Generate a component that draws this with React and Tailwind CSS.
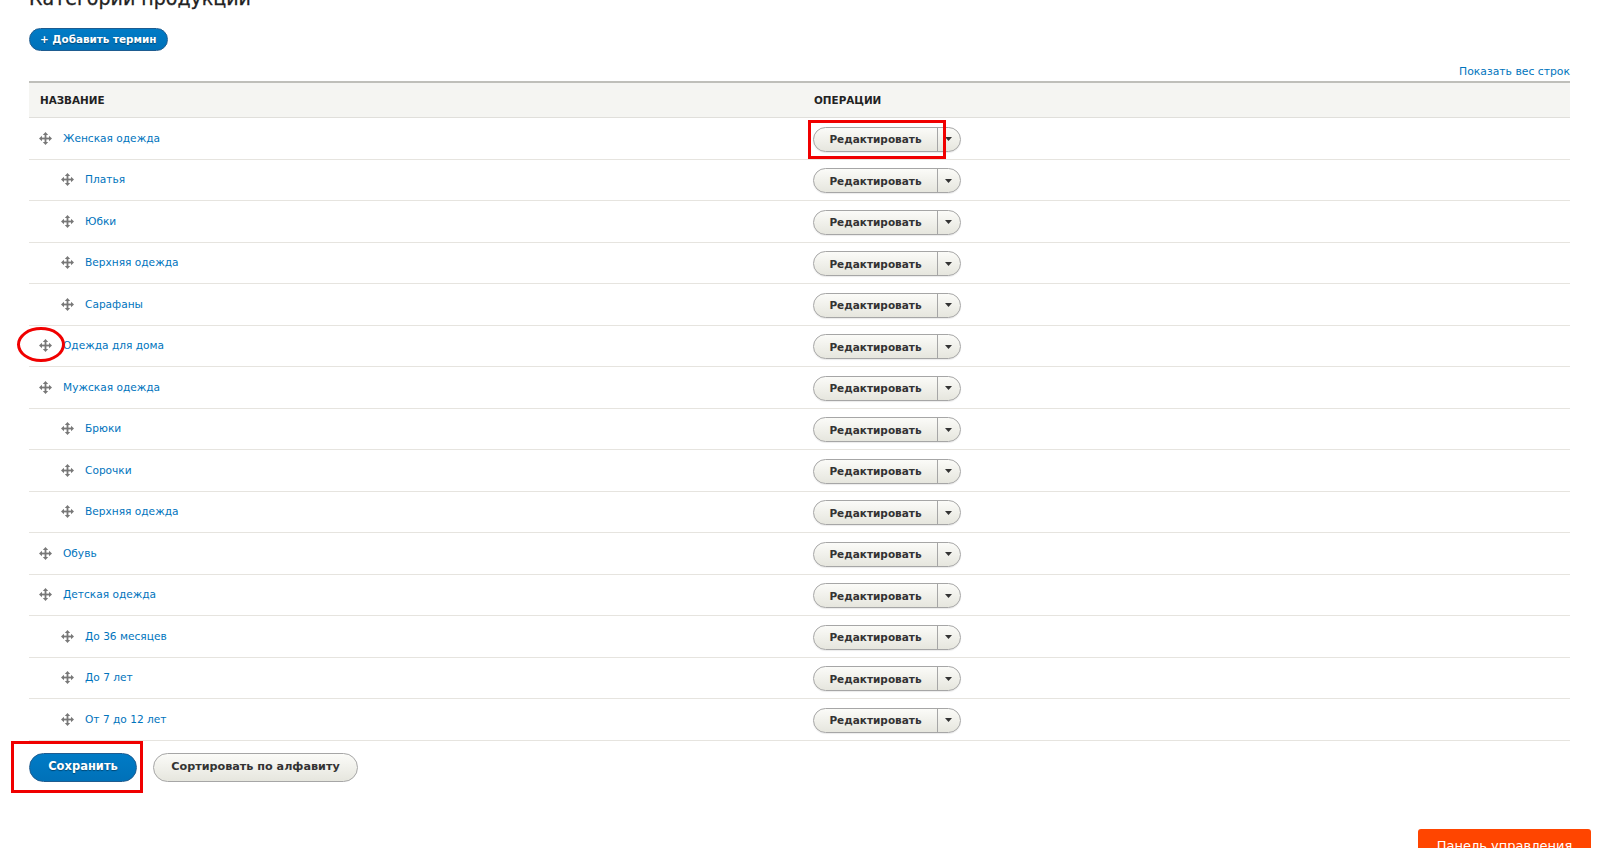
import React from "react";

const rows = [
  { name: "Женская одежда", level: 0 },
  { name: "Платья", level: 1 },
  { name: "Юбки", level: 1 },
  { name: "Верхняя одежда", level: 1 },
  { name: "Сарафаны", level: 1 },
  { name: "Одежда для дома", level: 0 },
  { name: "Мужская одежда", level: 0 },
  { name: "Брюки", level: 1 },
  { name: "Сорочки", level: 1 },
  { name: "Верхняя одежда", level: 1 },
  { name: "Обувь", level: 0 },
  { name: "Детская одежда", level: 0 },
  { name: "До 36 месяцев", level: 1 },
  { name: "До 7 лет", level: 1 },
  { name: "От 7 до 12 лет", level: 1 },
];

function Handle() {
  return (
    <svg width="13" height="13" viewBox="0 0 13 13" className="shrink-0">
      <g fill="#787878">
        <rect x="5.6" y="2" width="1.8" height="9" />
        <rect x="2" y="5.6" width="9" height="1.8" />
        <polygon points="6.5,0 3.8,3 9.2,3" />
        <polygon points="6.5,13 3.8,10 9.2,10" />
        <polygon points="0,6.5 3,3.8 3,9.2" />
        <polygon points="13,6.5 10,3.8 10,9.2" />
      </g>
    </svg>
  );
}

function EditButton() {
  return (
    <div className="flex h-[25px] w-[148px] items-stretch rounded-full border border-[#a6a6a6] bg-gradient-to-b from-[#fbfbf8] to-[#e6e6de] text-[#333] shadow-[0_1px_1px_rgba(0,0,0,0.08)]">
      <div className="flex w-[124px] items-center justify-center border-r border-[#a6a6a6] text-[10.5px] font-bold leading-none">
        Редактировать
      </div>
      <div className="flex flex-1 items-center justify-center pr-[2px]">
        <svg width="7" height="4" viewBox="0 0 7 4">
          <polygon points="0,0 7,0 3.5,4" fill="#333" />
        </svg>
      </div>
    </div>
  );
}

export default function App() {
  return (
    <div
      className="relative h-[848px] w-[1600px] overflow-hidden bg-white text-[#333]"
      style={{ fontFamily: '"DejaVu Sans", "Liberation Sans", sans-serif' }}
    >
      <div className="pl-[29px] pr-[30px]">
        <h1 className="mt-[-11px] h-[21px] text-[19px] font-normal leading-none text-[#222] [-webkit-text-stroke:0.3px_#222]">
          Категории продукции
        </h1>

        <div className="mt-[18px] flex">
          <div className="flex h-[23px] items-center rounded-full border border-[#1e5c90] bg-gradient-to-b from-[#007bc6] to-[#0071b8] px-[10px] text-[10.4px] font-bold leading-none text-white [text-shadow:0_1px_1px_rgba(0,0,0,0.4)]">
            + Добавить термин
          </div>
        </div>

        <div className="mt-[15px] flex h-[12px] justify-end text-[10.8px] leading-[12px] text-[#0074bd]">
          Показать вес строк
        </div>

        <div className="mt-[3px]">
          <div className="grid h-[37px] grid-cols-[774px_1fr] border-t-2 border-b border-t-[#bfbfba] border-b-[#e0dfdb] bg-[#f5f5f2] text-[10.4px] font-bold uppercase leading-none text-[#222]">
            <div className="flex items-center pl-[11px]">Название</div>
            <div className="flex items-center pl-[11px]">Операции</div>
          </div>
          {rows.map((r, i) => (
            <div
              key={i}
              className="grid h-[41.5px] grid-cols-[774px_1fr] border-b border-[#e6e4df]"
            >
              <div className="flex items-center pl-[10px]">
                {r.level === 1 && <div className="w-[22px] shrink-0" />}
                <Handle />
                <span className="ml-[11px] text-[10.6px] leading-none text-[#0074bd]">
                  {r.name}
                </span>
              </div>
              <div className="flex items-center pl-[10px] pt-[2px]">
                <EditButton />
              </div>
            </div>
          ))}
        </div>

        <div className="mt-[12px] flex items-center gap-[16px]">
          <div className="flex h-[29px] w-[108px] items-center justify-center rounded-full border border-[#1e5c90] bg-gradient-to-b from-[#007bc6] to-[#0071b8] text-[11.5px] font-bold leading-none text-white [text-shadow:0_1px_1px_rgba(0,0,0,0.4)]">
            Сохранить
          </div>
          <div className="flex h-[29px] w-[205px] items-center justify-center rounded-full border border-[#a6a6a6] bg-gradient-to-b from-[#fbfbf8] to-[#e6e6de] text-[11.2px] font-bold leading-none text-[#333]">
            Сортировать по алфавиту
          </div>
        </div>
      </div>

      {/* annotations */}
      <div className="absolute left-[808px] top-[120px] h-[39px] w-[138px] border-[3px] border-[#f00000]" />
      <div className="absolute left-[17px] top-[327px] h-[35px] w-[48px] rounded-[50%] border-[3px] border-[#f00000]" />
      <div className="absolute left-[11px] top-[741px] h-[52px] w-[132px] border-[3px] border-[#f00000]" />

      {/* floating toolbar button */}
      <div className="absolute left-[1418px] top-[829px] flex h-[40px] w-[173px] justify-center rounded-t-[3px] bg-[#ff4500] pt-[10px] text-[13px] leading-none text-white">
        Панель управления
      </div>
    </div>
  );
}
